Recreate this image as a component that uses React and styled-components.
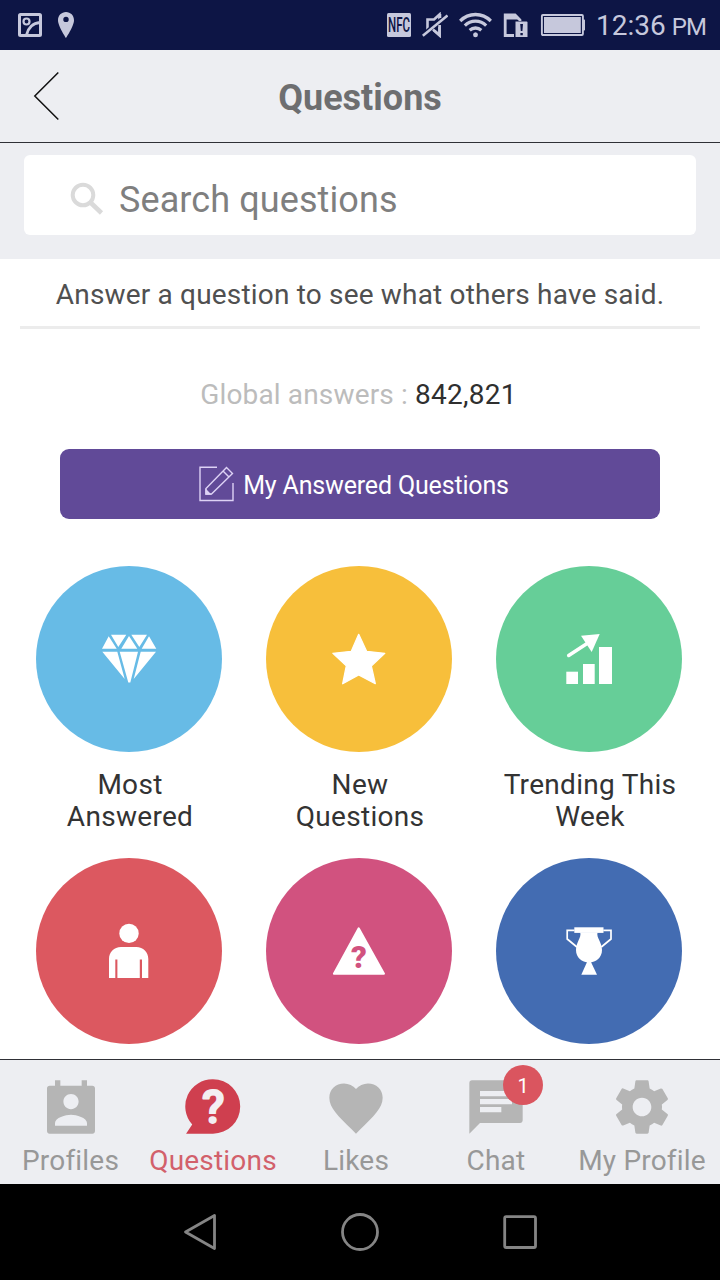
import React from "react";
import styled, { createGlobalStyle } from "styled-components";

const GlobalStyle = createGlobalStyle`
  * { box-sizing: border-box; }
  body { margin: 0; background: #fff; font-family: Roboto, "Liberation Sans", sans-serif; }
  svg { display: block; flex: none; }
  button { font: inherit; border: 0; padding: 0; background: none; }
`;

const Screen = styled.div`
  width: 720px;
  height: 1280px;
  display: flex;
  flex-direction: column;
  overflow: hidden;
  background: #fff;
`;

const StatusBar = styled.header`
  height: 50px;
  flex: none;
  display: flex;
  align-items: center;
  justify-content: space-between;
  padding: 0 13px 0 17px;
  background: #0d1545;
  color: #c6c8dc;
`;

const StatusGroup = styled.div`
  display: flex;
  align-items: center;
  gap: ${(p) => p.$gap}px;
`;

const Clock = styled.div`
  display: flex;
  align-items: baseline;
  font-size: 28px;
  line-height: 34px;
  padding-top: 3px;
  width: 111px;
  white-space: nowrap;
`;

const Meridiem = styled.span`
  font-size: 24px;
  margin-left: 6px;
  letter-spacing: -0.8px;
`;

const TitleBar = styled.div`
  height: 93px;
  flex: none;
  display: grid;
  grid-template-columns: 94px 1fr 94px;
  align-items: center;
  background: #edeef2;
  border-bottom: 1px solid #2f3036;
`;

const BackButton = styled.button`
  padding-left: 32px;
`;

const Title = styled.h1`
  margin: 3px 0 0;
  text-align: center;
  font-size: 36px;
  line-height: 44px;
  font-weight: 700;
  color: #6d6e70;
`;

const SearchArea = styled.div`
  flex: none;
  height: 116px;
  padding: 12px 24px 24px;
  background: #edeef2;
`;

const SearchField = styled.div`
  height: 80px;
  display: flex;
  align-items: center;
  padding-left: 43px;
  gap: 10px;
  background: #fff;
  border-radius: 6px;
`;

const Placeholder = styled.span`
  margin-top: 9px;
  font-size: 36px;
  line-height: 44px;
  letter-spacing: 0.1px;
  color: #7f7f7f;
`;

const Content = styled.main`
  flex: 1;
  min-height: 0;
  overflow: hidden;
`;

const Prompt = styled.p`
  margin: 0 20px;
  height: 70px;
  padding-top: 19px;
  border-bottom: 3px solid #ececec;
  text-align: center;
  font-size: 28px;
  line-height: 34px;
  letter-spacing: 0.18px;
  color: #505050;
  white-space: nowrap;
`;

const GlobalCount = styled.p`
  margin: 49px 3px 0 0;
  text-align: center;
  font-size: 28px;
  line-height: 34px;
  color: #bcbcbc;
`;

const CountLabel = styled.span`
  letter-spacing: 0.15px;
`;

const CountValue = styled.span`
  letter-spacing: 0.25px;
  color: #2f2f2f;
`;

const AnsweredButton = styled.button`
  display: flex;
  align-items: center;
  justify-content: center;
  gap: 8px;
  width: 600px;
  height: 70px;
  margin: 37px auto 0;
  padding-right: 12px;
  border-radius: 9px;
  background: #614a98;
  color: #fff;
  font-size: 25px;
  letter-spacing: -0.16px;
`;

const ButtonLabel = styled.span`
  padding-top: 3px;
`;

const CategoryGrid = styled.section`
  display: grid;
  grid-template-columns: repeat(3, 230px);
  grid-auto-rows: 292px;
  padding: 47px 0 0 14px;
`;

const Category = styled.div`
  display: flex;
  flex-direction: column;
  align-items: center;
  gap: 17px;
`;

const Disc = styled.div`
  width: 186px;
  height: 186px;
  flex: none;
  border-radius: 50%;
  display: flex;
  align-items: center;
  justify-content: center;
  background: ${(p) => p.$color};
`;

const CategoryName = styled.div`
  width: 202px;
  padding-left: 2px;
  text-align: center;
  font-size: 28px;
  line-height: 32px;
  letter-spacing: 0.3px;
  color: #333;
  white-space: pre-line;
`;

const TabBar = styled.nav`
  height: 125px;
  flex: none;
  display: grid;
  grid-template-columns: 141px 144px 142px 138px 154px;
  background: #edeef2;
  border-top: 1px solid #2f3036;
`;

const Tab = styled.div`
  display: flex;
  flex-direction: column;
  align-items: center;
  padding-top: 15px;
  color: ${(p) => (p.$active ? "#d2606b" : "#989898")};
`;

const TabIcon = styled.div`
  position: relative;
  color: ${(p) => (p.$active ? "#cf3f4f" : "#b5b5b5")};
`;

const TabLabel = styled.span`
  margin-top: 5px;
  font-size: 28px;
  line-height: 34px;
  letter-spacing: 0.2px;
  white-space: nowrap;
`;

const Badge = styled.span`
  position: absolute;
  left: 39px;
  top: -10px;
  width: 40px;
  height: 40px;
  border-radius: 50%;
  display: flex;
  align-items: center;
  justify-content: center;
  padding-top: 2px;
  background: #da555f;
  color: #fff;
  font-size: 20px;
`;

const SystemNav = styled.footer`
  height: 96px;
  flex: none;
  display: flex;
  align-items: center;
  justify-content: center;
  gap: 120px;
  background: #000;
`;

const Gallery = () => (
  <svg width="26" height="26" viewBox="0 0 26 26" fill="none" stroke="currentColor" strokeWidth="3">
    <rect x="2.5" y="2.5" width="21" height="21" rx="1" />
    <circle cx="9.5" cy="9.5" r="3" strokeWidth="2.2" />
    <path d="M9.5 23C11 16 16 11 23 10.5" />
  </svg>
);

const Pin = () => (
  <svg width="18" height="26" viewBox="0 0 18 26" fill="currentColor">
    <path fillRule="evenodd" d="M9 0C4.400 0 1 3.600 1 8.200C1 14 9 26 9 26S17 14 17 8.200C17 3.600 13.600 0 9 0ZM9 4.700A2.700 2.700 0 1 1 9 10.100A2.700 2.700 0 1 1 9 4.700Z" />
  </svg>
);

const Nfc = () => (
  <svg width="24" height="24" viewBox="0 0 24 24" overflow="visible">
    <rect width="24" height="24" rx="1.500" fill="currentColor" />
    <text x="1" y="19.200" fontSize="20.500" fontWeight="500" fontFamily="Roboto" textLength="22" lengthAdjust="spacingAndGlyphs" fill="#0d1545">NFC</text>
  </svg>
);

const Muted = () => (
  <svg width="26" height="26" viewBox="0 0 26 26" fill="none" stroke="currentColor" strokeWidth="2.600">
    <path d="M17.500 2.500L12 7.500H5.500V17.500H11L17.500 23V2.500Z" />
    <path d="M25 4L1 24" stroke="#0d1545" strokeWidth="6" />
    <path d="M25.500 3.500L.8 23.800" />
    <path d="M18 2V6M17.600 13V23.500L11 17.500" />
  </svg>
);

const Wifi = () => (
  <svg width="33" height="26" viewBox="0 0 34 26" preserveAspectRatio="none" fill="none" stroke="currentColor" strokeWidth="3.300">
    <path d="M1.200 9A22.500 22.500 0 0 1 32.800 9" />
    <path d="M6 13.700A15.600 15.600 0 0 1 28 13.700" />
    <path d="M11 18.300A9 9 0 0 1 23 18.300" />
    <circle cx="17" cy="22.800" r="2.500" fill="currentColor" stroke="none" />
  </svg>
);

const SimAlert = () => (
  <svg width="26" height="25" viewBox="0 0 26 25">
    <path d="M11 22.500H2.200V2H12L17 7V9" fill="none" stroke="currentColor" strokeWidth="2.800" />
    <path d="M1 1H12.500L18 6.500H1Z" fill="currentColor" />
    <path d="M13 8H25V25H13Z" fill="#0d1545" />
    <path d="M12.500 8.500H23.500A1 1 0 0 1 24.500 9.500V24H12.500Z" fill="currentColor" />
    <path d="M17.200 11H20L19.400 18H17.800ZM17.400 20H19.800V22.300H17.400Z" fill="#0d1545" />
  </svg>
);

const Battery = () => (
  <svg width="45" height="22" viewBox="0 0 45 22">
    <rect x="1.900" y="1" width="41" height="20" rx="1" fill="none" stroke="currentColor" strokeWidth="1.900" />
    <rect x="4" y="3" width="36.800" height="16" fill="currentColor" />
    <path d="M43 5.500H44.300A.7 .7 0 0 1 45 6.200V15.800A.7 .7 0 0 1 44.300 16.500H43Z" fill="currentColor" />
  </svg>
);

const BackChevron = () => (
  <svg width="28" height="50" viewBox="0 0 28 50" fill="none" stroke="#111" strokeWidth="1.500">
    <path d="M26.300 1.500L2.800 25L26.300 48.500" />
  </svg>
);

const SearchIcon = () => (
  <svg width="42" height="42" viewBox="0 0 42 42" fill="none" stroke="#dadada">
    <circle cx="16" cy="21" r="10.300" strokeWidth="4" />
    <path d="M23.500 28.500L34.500 39" strokeWidth="4.600" />
  </svg>
);

const EditIcon = () => (
  <svg width="36" height="36" viewBox="0 0 36 36" fill="none" stroke="#ddd2f5" strokeWidth="1.400">
    <path d="M18 1.200H1V34.500H34V17" />
    <path d="M7 22.500L27.500 1.500L33.500 7.500L12.500 28H7Z" />
    <path d="M24 5L30 11" />
    <path d="M7 24V28H11Z" fill="#ddd2f5" />
  </svg>
);

const glyphs = {
  diamond: (
    <g>
      <path d="M9.700 7.300L3 19.700H17.700ZM12 5.700H27.300L19.300 18ZM30 7L22.300 19.700H38.300ZM32.300 5.700H48L40.300 18ZM50 7.300L42.700 19.700H57.300Z" />
      <path d="M3.300 22.700H18.300L25.700 50ZM20.700 22.700H39L31.300 53.500H29.300ZM41.700 22.700H57L34.700 50Z" />
    </g>
  ),
  star: (
    <path
      d="M29.700 5.300L37.600 22.300L55.800 24.300L42.300 36.900L46.300 54.700L29.700 45.900L13.700 54.700L17.300 36.900L3.900 24.300L22.300 22.300Z"
      stroke="#fff" strokeWidth="1.300" strokeLinejoin="round"
    />
  ),
  trending: (
    <g>
      <rect x="7.300" y="42.700" width="11.700" height="12.300" />
      <rect x="24" y="35" width="11.700" height="20" />
      <rect x="40" y="18" width="13" height="37" />
      <path d="M9.700 26.500L30 13.300" stroke="#fff" strokeWidth="3.500" strokeLinecap="round" />
      <path d="M22 6.700L40.700 5L32.700 23Z" />
    </g>
  ),
  person: (
    <g>
      <circle cx="30" cy="12.400" r="9.700" />
      <path d="M10 57V38C10 31 15 26 22 26H37.300C44.300 26 49.300 31 49.300 38V57H43V38.500H40.800V57H18.400V38.500H16.300V57Z" />
    </g>
  ),
  question: (
    <g>
      <path d="M29.700 7.300L55 52.700H4.900Z" stroke="#fff" strokeWidth="2" strokeLinejoin="round" />
      <text x="30" y="47" textAnchor="middle" fontFamily="Roboto" fontWeight="900" fontSize="31" fill="#d1527f">?</text>
    </g>
  ),
  trophy: (
    <g>
      <rect x="15.300" y="6.300" width="29.200" height="5.600" />
      <path d="M15.500 9.300H8.200V18L17.900 26M44.300 9.300H52V18L42.300 26" fill="none" stroke="#fff" strokeWidth="1.700" />
      <path d="M21.300 11.500C22.500 17 17 21 17 29C17 36.500 22.800 41.500 30 41.500S43 36.500 43 29C43 21 37.200 17 38.500 11.500Z" />
      <path d="M28.500 40H31.500L38 53.700H22.300Z" />
    </g>
  ),
};

const CategoryIcon = ({ name }) => (
  <svg width="60" height="60" viewBox="0 0 60 60" fill="#fff">{glyphs[name]}</svg>
);

const tabGlyphs = {
  profiles: (
    <path d="M20 4h-2V2h-2v2H8V2H6v2H4c-.6 0-1 .4-1 1v16c0 .6.4 1 1 1h16c.6 0 1-.4 1-1V5c0-.6-.4-1-1-1zm-8 3.100c1.600 0 2.850 1.250 2.850 2.850s-1.250 2.850-2.850 2.850-2.850-1.250-2.850-2.850 1.250-2.850 2.850-2.850zM18 19H6v-1c0-2 4-3.100 6-3.100s6 1.100 6 3.100v1z" />
  ),
  questions: (
    <g>
      <path d="M12 1.600A10.200 10.200 0 1 1 12 22H1.900L4.200 18.600A10.200 10.200 0 0 1 12 1.600Z" />
      <text x="12.100" y="18" textAnchor="middle" fontFamily="Roboto" fontWeight="500" fontSize="17.400" fill="#f3eef2" stroke="#f3eef2" strokeWidth=".7" strokeLinejoin="round">?</text>
    </g>
  ),
  likes: (
    <path d="M12 22L10.550 20.500C5.400 15.500 2 12.300 2 8.500 2 5.420 4.420 3.200 7.500 3.200c1.740 0 3.410.81 4.500 2.090C13.090 4.010 14.760 3.200 16.500 3.200 19.580 3.200 22 5.420 22 8.500c0 3.800-3.400 7-8.550 12z" />
  ),
  chat: (
    <path d="M21 2H3c-.6 0-1 .4-1 1v19l4-4h15c.6 0 1-.4 1-1V3c0-.6-.4-1-1-1zM6 9h12v2H6V9zm8 5H6v-2h8v2zm4-6H6V6h12v2z" />
  ),
  settings: (
    <path d="M19.430 12.980c.04-.32.07-.64.07-.98s-.03-.66-.07-.98l2.110-1.650c.19-.15.24-.42.12-.64l-2-3.460c-.12-.22-.39-.3-.61-.22l-2.490 1c-.52-.4-1.080-.73-1.690-.98l-.38-2.650C14.460 2.180 14.250 2 14 2h-4c-.25 0-.46.18-.49.42l-.38 2.650c-.61.25-1.170.59-1.690.98l-2.490-1c-.23-.09-.49 0-.61.22l-2 3.460c-.13.22-.07.49.12.64l2.110 1.650c-.04.32-.07.65-.07.98s.03.66.07.98l-2.110 1.650c-.19.15-.24.42-.12.64l2 3.460c.12.22.39.3.61.22l2.490-1c.52.4 1.080.73 1.690.98l.38 2.650c.03.24.24.42.49.42h4c.25 0 .46-.18.49-.42l.38-2.650c.61-.25 1.170-.59 1.690-.98l2.490 1c.23.09.49 0 .61-.22l2-3.460c.12-.22.07-.49-.12-.64l-2.110-1.650zM12 15.500c-1.930 0-3.500-1.570-3.500-3.500s1.570-3.500 3.500-3.500 3.500 1.570 3.500 3.500-1.570 3.500-3.500 3.500z" />
  ),
};

const categories = [
  { icon: "diamond", color: "#67bbe6", name: "Most\nAnswered" },
  { icon: "star", color: "#f7bf3b", name: "New\nQuestions" },
  { icon: "trending", color: "#66ce98", name: "Trending This\nWeek" },
  { icon: "person", color: "#dc5860" },
  { icon: "question", color: "#d1527f" },
  { icon: "trophy", color: "#436cb2" },
];

const tabs = [
  { icon: "profiles", label: "Profiles" },
  { icon: "questions", label: "Questions", active: true },
  { icon: "likes", label: "Likes" },
  { icon: "chat", label: "Chat", badge: 1 },
  { icon: "settings", label: "My Profile" },
];

export default function App() {
  return (
    <Screen>
      <GlobalStyle />
      <StatusBar>
        <StatusGroup $gap={14}>
          <Gallery />
          <Pin />
        </StatusGroup>
        <StatusGroup $gap={11}>
          <Nfc />
          <Muted />
          <Wifi />
          <SimAlert />
          <Battery />
          <Clock>12:36<Meridiem>PM</Meridiem></Clock>
        </StatusGroup>
      </StatusBar>
      <TitleBar>
        <BackButton aria-label="Back"><BackChevron /></BackButton>
        <Title>Questions</Title>
      </TitleBar>
      <SearchArea>
        <SearchField>
          <SearchIcon />
          <Placeholder>Search questions</Placeholder>
        </SearchField>
      </SearchArea>
      <Content>
        <Prompt>Answer a question to see what others have said.</Prompt>
        <GlobalCount>
          <CountLabel>Global answers : </CountLabel>
          <CountValue>842,821</CountValue>
        </GlobalCount>
        <AnsweredButton>
          <EditIcon />
          <ButtonLabel>My Answered Questions</ButtonLabel>
        </AnsweredButton>
        <CategoryGrid>
          {categories.map((c) => (
            <Category key={c.icon}>
              <Disc $color={c.color}><CategoryIcon name={c.icon} /></Disc>
              {c.name && <CategoryName>{c.name}</CategoryName>}
            </Category>
          ))}
        </CategoryGrid>
      </Content>
      <TabBar>
        {tabs.map((t) => (
          <Tab key={t.icon} $active={t.active}>
            <TabIcon $active={t.active}>
              <svg width="64" height="64" viewBox="0 0 24 24" fill="currentColor">{tabGlyphs[t.icon]}</svg>
              {t.badge && <Badge>{t.badge}</Badge>}
            </TabIcon>
            <TabLabel>{t.label}</TabLabel>
          </Tab>
        ))}
      </TabBar>
      <SystemNav>
        <svg width="40" height="40" viewBox="0 0 40 40" fill="none" stroke="#858585" strokeWidth="2.800" strokeLinejoin="round">
          <path d="M34.500 3.500V36.500L5.500 20Z" />
        </svg>
        <svg width="40" height="40" viewBox="0 0 40 40" fill="none" stroke="#858585" strokeWidth="2.800">
          <circle cx="20" cy="20" r="17.500" />
        </svg>
        <svg width="40" height="40" viewBox="0 0 40 40" fill="none" stroke="#858585" strokeWidth="2.800">
          <rect x="4.700" y="4.700" width="30.800" height="30.800" rx="1.500" />
        </svg>
      </SystemNav>
    </Screen>
  );
}
